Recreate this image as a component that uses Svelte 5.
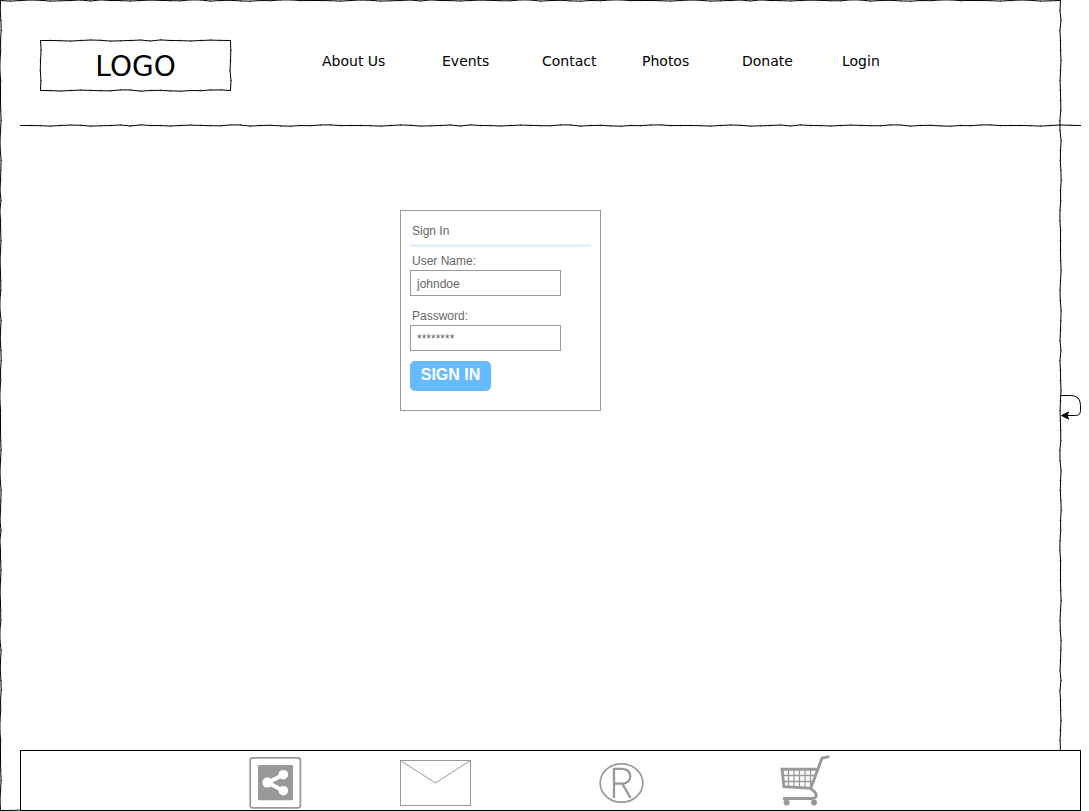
<script>
  const links = ['About Us', 'Events', 'Contact', 'Photos', 'Donate', 'Login'];

  let frameWidth = $state(0);
  let frameHeight = $state(0);
  let ruleWidth = $state(0);
  let logoWidth = $state(0);
  let logoHeight = $state(0);
  let user = $state('johndoe');

  // Sideways drift of a hand-drawn stroke, one value for each 10px step.
  const drift = [0, 0, 0.2, 0.6, 0, -0.5, -0.2, 0.6, 0.3, 0, -0.5, 0.5, -0.6, 0, 0.1, 0.5, 0, -0.4, -0.1, 0.2, 0.3, -0.6, -0.5, 0.6, 0, -0.2, 0.4, 0.7, 0, 0.2, -0.5, -0.6, 0.1];

  function stroke(x, y, length, vertical, seed) {
    const steps = Math.max(1, Math.round(length / 10));
    let line = '';
    let ticks = '';
    for (let i = 0; i <= steps; i++) {
      const along = (length * i) / steps;
      const off = i === 0 || i === steps ? 0 : drift[(i + seed) % drift.length];
      const px = vertical ? x + off : x + along;
      const py = vertical ? y + along : y + off;
      line += `${i ? 'L' : 'M'}${px} ${py}`;
      if (i && i < steps) ticks += vertical ? `M${px - 1} ${py}h2` : `M${px} ${py - 1}v2`;
    }
    return { line, ticks };
  }

  function box(w, h, seed) {
    const r = w - 0.5;
    const b = h - 0.5;
    return [
      stroke(0.5, 0.5, r - 0.5, false, seed),
      stroke(r, 0.5, b - 0.5, true, seed + 7),
      stroke(0.5, b, r - 0.5, false, seed + 13),
      stroke(0.5, 0.5, b - 0.5, true, seed + 22)
    ];
  }
</script>

{#snippet sketch(strokes)}
  <svg class="sketch" aria-hidden="true">
    {#each strokes as s}
      <path d={s.line} fill="none" stroke="#000" stroke-linecap="square" />
      <path d={s.ticks} fill="none" stroke="#000" stroke-opacity="0.5" />
    {/each}
  </svg>
{/snippet}

<div class="page">
  <div class="frame" bind:clientWidth={frameWidth} bind:clientHeight={frameHeight}>
    {@render sketch(frameWidth ? box(frameWidth, frameHeight, 2) : [])}
    <svg class="loop" viewBox="0 0 22 24" aria-hidden="true">
      <path d="M1 2.5H10.5Q20.5 2.5 20.5 12.5V17.5Q20.5 22.5 15.5 22.5H7" fill="none" stroke="#000" />
      <path d="M1.6 22.5L8.6 19L6.9 22.5L8.6 26Z" fill="#000" stroke="#000" />
    </svg>
  </div>

  <header>
    <div class="logo" bind:clientWidth={logoWidth} bind:clientHeight={logoHeight}>
      {@render sketch(logoWidth ? box(logoWidth, logoHeight, 0) : [])}
      LOGO
    </div>
    <nav>
      {#each links as link}
        <a href="#top">{link}</a>
      {/each}
    </nav>
  </header>
  <div class="rule" bind:clientWidth={ruleWidth}>
    {@render sketch(ruleWidth ? [stroke(0.5, 0.5, ruleWidth - 1, false, 0)] : [])}
  </div>

  <main>
    <form onsubmit={(e) => e.preventDefault()}>
      <h1>Sign In</h1>
      <label for="user">User Name:</label>
      <input id="user" type="text" autocomplete="off" bind:value={user} />
      <label for="password">Password:</label>
      <input id="password" type="text" autocomplete="off" value="********" />
      <button type="submit">SIGN IN</button>
    </form>
  </main>

  <footer>
    <a href="#share" aria-label="Share">
      <svg width="53" height="56" viewBox="0 0 53 56">
        <rect x="1.2" y="2.9" width="50.2" height="49.9" rx="2.5" fill="#fff" stroke="#999" stroke-width="1.8" />
        <rect x="9" y="10" width="35" height="35.2" rx="1" fill="#999" />
        <path d="M34.3 19.7L18.7 27.6L34.3 35.7" fill="none" stroke="#fff" stroke-width="4" />
        <g fill="#fff">
          <circle cx="34.3" cy="19.7" r="4.8" />
          <circle cx="18.3" cy="27.6" r="5" />
          <circle cx="34.3" cy="35.7" r="4.8" />
        </g>
      </svg>
    </a>
    <a href="#mail" aria-label="Mail">
      <svg width="71" height="46" viewBox="0 0 71 46" fill="none" stroke="#999">
        <rect x="0.5" y="0.5" width="70" height="45" />
        <path d="M0.5 0.5L35.5 23L70.5 0.5" />
      </svg>
    </a>
    <a href="#rights" aria-label="Registered">
      <svg width="45" height="42" viewBox="0 0 45 42" fill="none" stroke="#999">
        <ellipse cx="22.5" cy="21" rx="21.3" ry="19.2" stroke-width="1.7" />
        <path d="M15 36V6.8H23.5C33.8 6.8 33.8 21.6 23.5 21.6H15M23.2 21.6L31.6 36" stroke-width="2.3" />
      </svg>
    </a>
    <a href="#cart" aria-label="Shopping cart">
      <svg width="50" height="56" viewBox="0 0 50 56" fill="none" stroke="#999">
        <path d="M49.3 1.6L42 3L30.8 33.2L3.9 31.7L2 14.2H36.5" stroke-width="2.9" />
        <path d="M30.5 33.5Q37.5 38 36 41.8Q34.6 43.6 29 43.6H3" stroke-width="3" />
        <path d="M8.5 14V31M14 14V32M19.5 14V32.5M25 14V33M30.5 14V32M3 20.5H35M3.5 26.5H33" stroke-width="1.3" />
        <circle cx="6.6" cy="47.6" r="3" fill="#999" stroke="none" />
        <circle cx="34" cy="47.6" r="3" fill="#999" stroke="none" />
      </svg>
    </a>
  </footer>
</div>

<style>
  :global(body) {
    margin: 0;
    background: #fff;
  }

  .page {
    position: relative;
    display: flex;
    flex-direction: column;
    box-sizing: border-box;
    min-height: 100vh;
    padding: 0 8px 0 20px;
    overflow: hidden;
    color: #000;
    font-family: 'DejaVu Sans', Verdana, sans-serif;
  }

  .frame {
    position: absolute;
    inset: 0 28px 0 0;
    pointer-events: none;
  }

  .sketch {
    position: absolute;
    inset: 0;
    width: 100%;
    height: 100%;
    overflow: visible;
  }

  .loop {
    position: absolute;
    top: 393px;
    left: 100%;
    width: 22px;
    height: 24px;
    margin-left: -1px;
    overflow: visible;
  }

  header {
    display: flex;
    align-items: flex-start;
    gap: 91px;
    box-sizing: border-box;
    height: 125px;
    padding: 40px 20px 0;
  }

  .logo {
    position: relative;
    box-sizing: border-box;
    flex: none;
    width: 191px;
    height: 51px;
    font-size: 28px;
    line-height: 53px;
    text-align: center;
  }

  nav {
    display: grid;
    grid-template-columns: 120px repeat(5, 100px);
    padding-top: 11px;
  }

  nav a {
    color: inherit;
    font-size: 14px;
    line-height: 20px;
    text-decoration: none;
  }

  .rule {
    position: relative;
    height: 1px;
  }

  main {
    flex: 1;
    padding: 84px 0 40px 380px;
  }

  form {
    display: flex;
    flex-direction: column;
    align-items: flex-start;
    box-sizing: border-box;
    width: 201px;
    padding: 10px 9px 19px;
    border: 1px solid #999;
    background: #fff;
    color: #666;
    font-family: 'Liberation Sans', Arial, sans-serif;
    font-size: 12px;
  }

  h1 {
    align-self: stretch;
    box-sizing: border-box;
    height: 26px;
    margin: 0 0 5px;
    padding-left: 2px;
    border-bottom: 3px solid #e3f0ff;
    font-size: 12px;
    font-weight: 400;
    line-height: 20px;
  }

  label {
    padding-left: 2px;
    line-height: 18px;
  }

  input {
    box-sizing: border-box;
    width: 151px;
    height: 26px;
    margin: 0 0 11px;
    padding: 2px 6px 0;
    border: 1px solid #999;
    border-radius: 0;
    background: #fff;
    color: #666;
    font: inherit;
  }

  button {
    height: 30px;
    width: 81px;
    margin-top: -1px;
    padding: 0 0 2px;
    border: 0;
    border-radius: 5px;
    background: #66bbff;
    color: #fff;
    font: bold 16px 'Liberation Sans', Arial, sans-serif;
  }

  footer {
    position: relative;
    display: grid;
    grid-template-columns: 151px 199px 181px 50px;
    align-items: center;
    box-sizing: border-box;
    height: 61px;
    padding: 4px 0 0 228px;
    border: 1px solid #000;
    background: #fff;
  }

  footer a {
    display: flex;
  }
</style>
